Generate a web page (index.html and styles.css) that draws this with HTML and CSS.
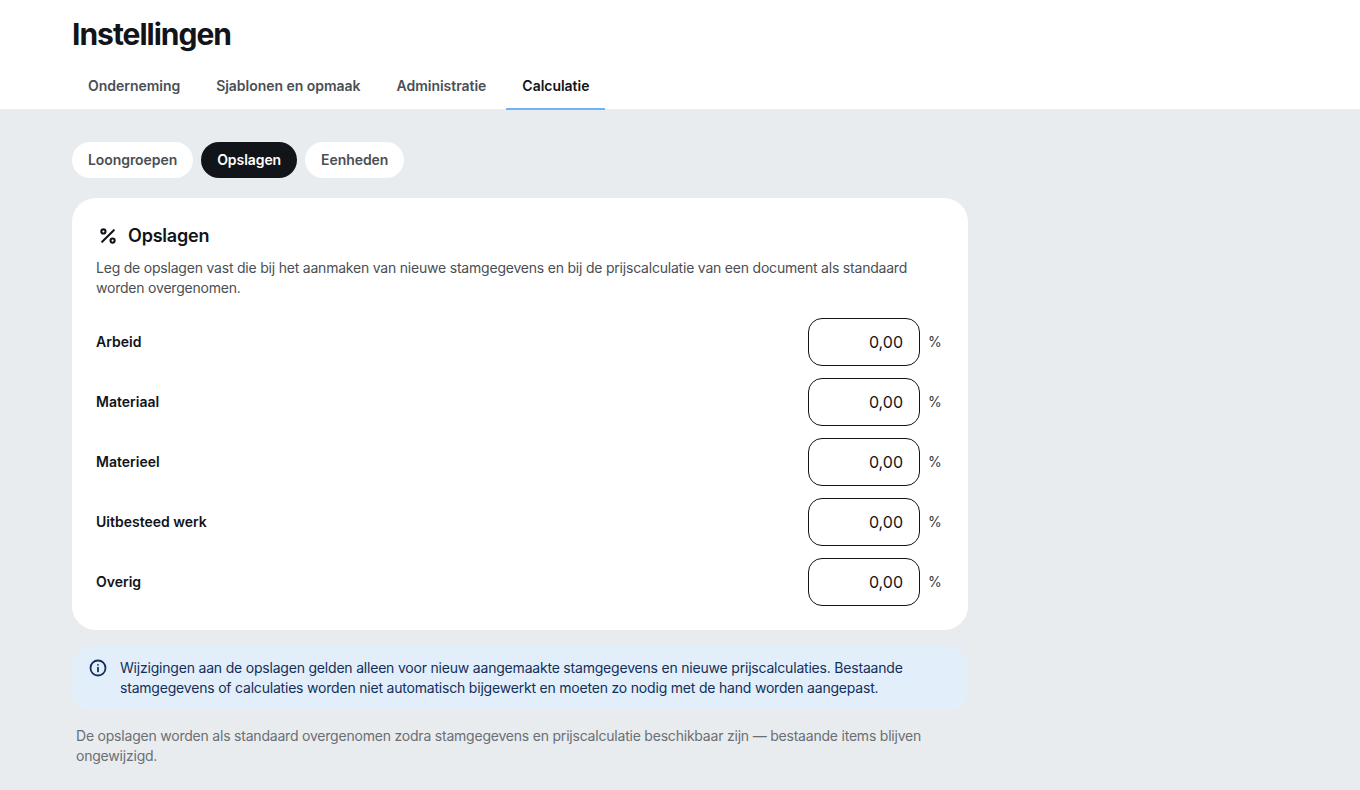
FILE: index.html
```html
<!DOCTYPE html>
<html lang="nl">
<head>
<meta charset="utf-8">
<title>Instellingen</title>
<link rel="stylesheet" href="styles.css">
</head>
<body>
<header class="topbar">
  <h1 class="page-title">Instellingen</h1>
  <nav class="tabs">
    <a class="tab">Onderneming</a>
    <a class="tab">Sjablonen en opmaak</a>
    <a class="tab">Administratie</a>
    <a class="tab tab-active">Calculatie</a>
  </nav>
</header>
<main class="content">
  <div class="pills">
    <a class="pill">Loongroepen</a>
    <a class="pill pill-active">Opslagen</a>
    <a class="pill">Eenheden</a>
  </div>
  <section class="card">
    <h2 class="card-title">
      <svg class="title-icon" viewBox="0 0 24 24" fill="none" stroke="currentColor" stroke-width="2.5" stroke-linecap="round"><line x1="19" y1="5" x2="5" y2="19"/><circle cx="6.5" cy="6.5" r="2.5"/><circle cx="17.5" cy="17.5" r="2.5"/></svg>
      Opslagen
    </h2>
    <p class="card-desc">Leg de opslagen vast die bij het aanmaken van nieuwe stamgegevens en bij de prijscalculatie van een document als standaard worden overgenomen.</p>
    <div class="rows">
      <div class="row"><span class="row-label">Arbeid</span><span class="field"><span class="input">0,00</span><span class="unit">%</span></span></div>
      <div class="row"><span class="row-label">Materiaal</span><span class="field"><span class="input">0,00</span><span class="unit">%</span></span></div>
      <div class="row"><span class="row-label">Materieel</span><span class="field"><span class="input">0,00</span><span class="unit">%</span></span></div>
      <div class="row"><span class="row-label">Uitbesteed werk</span><span class="field"><span class="input">0,00</span><span class="unit">%</span></span></div>
      <div class="row"><span class="row-label">Overig</span><span class="field"><span class="input">0,00</span><span class="unit">%</span></span></div>
    </div>
  </section>
  <div class="notice">
    <svg class="notice-icon" viewBox="0 0 24 24" fill="none" stroke="currentColor" stroke-width="2.4" stroke-linecap="round"><circle cx="12" cy="12" r="10"/><line x1="12" y1="16.5" x2="12" y2="11.5"/><line x1="12" y1="7.8" x2="12.01" y2="7.8"/></svg>
    <p class="notice-text">Wijzigingen aan de opslagen gelden alleen voor nieuw aangemaakte stamgegevens en nieuwe prijscalculaties. Bestaande stamgegevens of calculaties worden niet automatisch bijgewerkt en moeten zo nodig met de hand worden aangepast.</p>
  </div>
  <p class="footnote">De opslagen worden als standaard overgenomen zodra stamgegevens en prijscalculatie beschikbaar zijn — bestaande items blijven ongewijzigd.</p>
</main>
</body>
</html>
```
FILE: styles.css
```css
* { box-sizing: border-box; }
html, body { margin: 0; height: 100%; }
body {
  font-family: Inter, "Liberation Sans", sans-serif;
  background: #e8ecef;
  color: #111418;
  overflow: hidden;
}
.topbar {
  background: #fff;
  height: 109px;
  padding: 0 72px;
}
.page-title {
  margin: 0;
  padding-top: 15px;
  font-size: 30px;
  line-height: 38px;
  font-weight: 700;
  letter-spacing: -1px;
  height: 66px;
}
.tabs { display: flex; gap: 4px; height: 44px; }
.tab {
  padding: 0 16px;
  font-size: 14px;
  font-weight: 600;
  line-height: 40px;
  letter-spacing: -0.03px;
  color: #4a4f55;
  height: 44px;
}
.tab-active { color: #111418; border-bottom: 2px solid #70b0f5; }
.content { padding: 33px 72px 0; width: 1040px; }
.pills { display: flex; gap: 8px; }
.pill {
  height: 36px;
  padding: 0 16px;
  border-radius: 18px;
  background: #fff;
  font-size: 14px;
  font-weight: 600;
  line-height: 36px;
  letter-spacing: -0.07px;
  color: #4a4f55;
}
.pill-active { background: #111418; color: #fff; }
.card {
  margin-top: 20px;
  background: #fff;
  border-radius: 24px;
  padding: 24px;
  height: 432px;
}
.card-title {
  display: flex;
  align-items: center;
  gap: 8px;
  margin: 0;
  font-size: 18px;
  line-height: 28px;
  font-weight: 600;
  letter-spacing: -0.2px;
}
.title-icon { width: 24px; height: 24px; padding: 2px; }
.card-desc {
  margin: 8px 0 0;
  font-size: 14px;
  line-height: 20px;
  letter-spacing: -0.21px;
  color: #4a4f55;
}
.rows { margin-top: 20px; display: flex; flex-direction: column; gap: 12px; }
.row { display: flex; justify-content: space-between; align-items: center; height: 48px; }
.row-label { font-size: 14px; font-weight: 600; line-height: 20px; }
.field { display: flex; align-items: center; gap: 8px; }
.input {
  width: 112px;
  height: 48px;
  border: 1px solid #111418;
  border-radius: 14px;
  padding: 0 16px;
  text-align: right;
  font-size: 16px;
  line-height: 46px;
}
.unit { font-size: 14px; line-height: 20px; color: #33373c; width: 16px; }
.notice {
  margin-top: 16px;
  display: flex;
  gap: 12px;
  padding: 12px 16px;
  background: #e2eefa;
  border-radius: 20px;
  color: #12305a;
}
.notice-icon { width: 20px; height: 20px; padding: 1px; flex: none; }
.notice-text { margin: 0; font-size: 14px; line-height: 20px; letter-spacing: -0.2px; }
.footnote {
  margin: 16px 0 0;
  padding: 0 4px;
  font-size: 14px;
  line-height: 20px;
  letter-spacing: -0.21px;
  color: #6a6f75;
}
```
